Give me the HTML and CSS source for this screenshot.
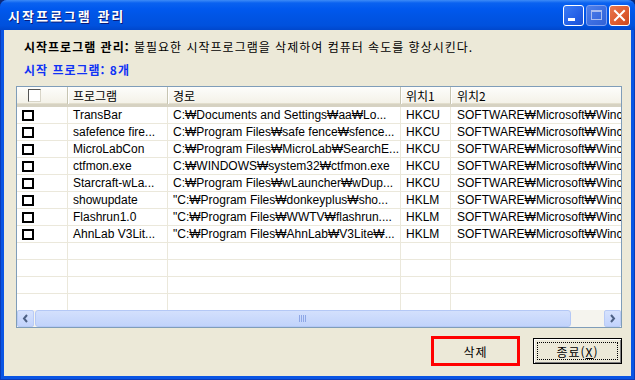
FILE: index.html
```html
<!DOCTYPE html>
<html lang="ko">
<head>
  <meta charset="UTF-8" />
  <title>시작프로그램 관리</title>
  <link rel="stylesheet" href="styles.css">
</head>
<body>
  <div class="window">
    <div class="titlebar">
      <span class="title">시작프로그램 관리</span>
      <div class="controls">
        <div class="tbtn min">
          <svg width="21" height="21" viewBox="0 0 21 21"><rect x="5" y="13" width="7" height="3" fill="#fff"/></svg>
        </div>
        <div class="tbtn max">
          <svg width="21" height="21" viewBox="0 0 21 21"><rect x="5.5" y="5.5" width="10" height="9" fill="none" stroke="#a9bdf0" stroke-width="1"/><rect x="5" y="5" width="11" height="2" fill="#a9bdf0"/></svg>
        </div>
        <div class="tbtn close">
          <svg width="21" height="21" viewBox="0 0 21 21"><path d="M6 6 L15 15 M15 6 L6 15" stroke="#fff" stroke-width="2" stroke-linecap="square"/></svg>
        </div>
      </div>
    </div>

    <div class="client">
      <p class="desc"><b>시작프로그램 관리:</b> 불필요한 시작프로그램을 삭제하여 컴퓨터 속도를 향상시킨다.</p>
      <p class="count">시작 프로그램: 8개</p>

      <div class="listview">
        <div class="row hdr">
          <div class="cell c1"><span class="hchk"></span></div>
          <div class="cell c2">프로그램</div>
          <div class="cell c3">경로</div>
          <div class="cell c4">위치1</div>
          <div class="cell c5">위치2</div>
        </div>

        <div class="rows">
          <div class="row">
            <div class="cell c1"><span class="chk"></span></div>
            <div class="cell c2">TransBar</div>
            <div class="cell c3">C:₩Documents and Settings₩aa₩Lo...</div>
            <div class="cell c4">HKCU</div>
            <div class="cell c5">SOFTWARE₩Microsoft₩Winc</div>
          </div>
          <div class="row">
            <div class="cell c1"><span class="chk"></span></div>
            <div class="cell c2">safefence fire...</div>
            <div class="cell c3">C:₩Program Files₩safe fence₩sfence...</div>
            <div class="cell c4">HKCU</div>
            <div class="cell c5">SOFTWARE₩Microsoft₩Winc</div>
          </div>
          <div class="row">
            <div class="cell c1"><span class="chk"></span></div>
            <div class="cell c2">MicroLabCon</div>
            <div class="cell c3">C:₩Program Files₩MicroLab₩SearchE...</div>
            <div class="cell c4">HKCU</div>
            <div class="cell c5">SOFTWARE₩Microsoft₩Winc</div>
          </div>
          <div class="row">
            <div class="cell c1"><span class="chk"></span></div>
            <div class="cell c2">ctfmon.exe</div>
            <div class="cell c3">C:₩WINDOWS₩system32₩ctfmon.exe</div>
            <div class="cell c4">HKCU</div>
            <div class="cell c5">SOFTWARE₩Microsoft₩Winc</div>
          </div>
          <div class="row">
            <div class="cell c1"><span class="chk"></span></div>
            <div class="cell c2">Starcraft-wLa...</div>
            <div class="cell c3">C:₩Program Files₩wLauncher₩wDup...</div>
            <div class="cell c4">HKCU</div>
            <div class="cell c5">SOFTWARE₩Microsoft₩Winc</div>
          </div>
          <div class="row">
            <div class="cell c1"><span class="chk"></span></div>
            <div class="cell c2">showupdate</div>
            <div class="cell c3">"C:₩Program Files₩donkeyplus₩sho...</div>
            <div class="cell c4">HKLM</div>
            <div class="cell c5">SOFTWARE₩Microsoft₩Winc</div>
          </div>
          <div class="row">
            <div class="cell c1"><span class="chk"></span></div>
            <div class="cell c2">Flashrun1.0</div>
            <div class="cell c3">"C:₩Program Files₩WWTV₩flashrun....</div>
            <div class="cell c4">HKLM</div>
            <div class="cell c5">SOFTWARE₩Microsoft₩Winc</div>
          </div>
          <div class="row">
            <div class="cell c1"><span class="chk"></span></div>
            <div class="cell c2">AhnLab V3Lit...</div>
            <div class="cell c3">"C:₩Program Files₩AhnLab₩V3Lite₩...</div>
            <div class="cell c4">HKLM</div>
            <div class="cell c5">SOFTWARE₩Microsoft₩Winc</div>
          </div>

          <div class="row"><div class="cell c1"></div><div class="cell c2"></div><div class="cell c3"></div><div class="cell c4"></div><div class="cell c5"></div></div>
          <div class="row"><div class="cell c1"></div><div class="cell c2"></div><div class="cell c3"></div><div class="cell c4"></div><div class="cell c5"></div></div>
          <div class="row"><div class="cell c1"></div><div class="cell c2"></div><div class="cell c3"></div><div class="cell c4"></div><div class="cell c5"></div></div>
          <div class="row"><div class="cell c1"></div><div class="cell c2"></div><div class="cell c3"></div><div class="cell c4"></div><div class="cell c5"></div></div>
        </div>

        <div class="hscroll">
          <div class="sbtn">
            <svg width="15" height="15" viewBox="0 0 15 15"><path d="M9 4 L6 7.5 L9 11" fill="none" stroke="#4d6185" stroke-width="2"/></svg>
          </div>
          <div class="thumb">
            <svg width="8" height="7" viewBox="0 0 8 7"><path d="M0.5 0 V7 M2.5 0 V7 M4.5 0 V7 M6.5 0 V7" stroke="#8ea7e6" stroke-width="1"/></svg>
          </div>
          <div class="track"></div>
          <div class="sbtn">
            <svg width="15" height="15" viewBox="0 0 15 15"><path d="M6 4 L9 7.5 L6 11" fill="none" stroke="#4d6185" stroke-width="2"/></svg>
          </div>
        </div>
      </div>

      <div class="actions">
        <button class="btn btn-del">삭제</button>
        <button class="btn btn-close"><span class="focus">종료(<u>X</u>)</span></button>
      </div>
    </div>
  </div>
</body>
</html>
```

FILE: styles.css
```css
body {
  margin: 0;
  background-color: #0c2a7a;
  font-family: "Noto Sans CJK KR", sans-serif;
  font-size: 12px;
  color: #000;
}
.window {
  width: 635px;
  height: 380px;
  display: flex;
  flex-direction: column;
  background-color: #0a55e4;
  border-radius: 7px 7px 0 0;
  box-shadow: inset 1px 0 #0b3bb8, inset -1px 0 #0b3bb8, inset 0 -1px #0b3bb8;
}
.titlebar {
  height: 30px;
  display: flex;
  align-items: center;
  justify-content: space-between;
  border-radius: 7px 7px 0 0;
  background: linear-gradient(#3d8bf7 0, #0a62f0 3px, #0058ee 9px, #0055e6 50%, #0051dd 85%, #0047cc 100%);
}
.title {
  padding-left: 8px;
  color: #fff;
  font-weight: bold;
  font-size: 13px;
  letter-spacing: 2px;
  text-shadow: 1px 1px #0a1a7a;
}
.controls {
  display: flex;
  gap: 2px;
  padding-right: 5px;
}
.tbtn {
  width: 21px;
  height: 21px;
  box-sizing: border-box;
  border: 1px solid #fff;
  border-radius: 3px;
  display: flex;
}
.tbtn svg {
  margin: -1px;
}
.min {
  background: linear-gradient(135deg, #3c7cf5, #2460e6 60%, #1c50d4);
}
.max {
  border-color: #7e9ff0;
  background: linear-gradient(135deg, #4f80ea, #3a6ce0 60%, #3262d6);
}
.close {
  background: linear-gradient(135deg, #e8784f, #dd5a2e 60%, #c9481e);
}
.client {
  flex: 1;
  margin: 0 4px 4px;
  padding-top: 9px;
  background-color: #ece9d8;
}
.desc {
  margin: 0 0 0 20px;
  line-height: 16px;
  letter-spacing: 1px;
}
.count {
  margin: 7px 0 0 20px;
  line-height: 16px;
  color: #1133f5;
  font-weight: bold;
  letter-spacing: 1px;
}
.listview {
  width: 606px;
  height: 242px;
  box-sizing: border-box;
  margin: 8px 0 0 12px;
  border: 1px solid #7f9db9;
  background-color: #fff;
  display: flex;
  flex-direction: column;
}
.rows {
  flex: 1;
  overflow: hidden;
}
.row {
  display: flex;
  height: 17px;
  box-sizing: border-box;
  border-bottom: 1px solid #ebe8db;
  font-family: "Liberation Sans", "Noto Sans CJK KR", sans-serif;
}
.cell {
  box-sizing: border-box;
  border-right: 1px solid #ebe8db;
  padding-left: 5px;
  line-height: 16px;
  white-space: nowrap;
  overflow: hidden;
  display: flex;
  align-items: center;
}
.c1 { width: 51px; }
.c2 { width: 100px; }
.c3 { width: 233px; }
.c4 { width: 50px; }
.c5 { flex: 1; padding-left: 6px; border-right: none; }
.hdr {
  height: 20px;
  flex-shrink: 0;
  background: linear-gradient(#fdfdfb, #f3f1e7);
  border-bottom: 3px solid #d6d2c2;
  box-shadow: inset 0 -1px #e2decd;
  font-family: "Noto Sans CJK KR", sans-serif;
}
.hdr .cell {
  border-right: 1px solid #c7c5b2;
  box-shadow: 1px 0 #fff;
}
.hdr .c5 {
  border-right: none;
  box-shadow: none;
}
.chk {
  width: 12px;
  height: 11px;
  box-sizing: border-box;
  border: 2px solid #000;
  background-color: #fff;
}
.hchk {
  width: 13px;
  height: 13px;
  box-sizing: border-box;
  margin-left: 6px;
  border: 1px solid;
  border-color: #555 #d8d5c8 #d8d5c8 #555;
  background-color: #fff;
}
.hscroll {
  display: flex;
  height: 17px;
  flex-shrink: 0;
  background-color: #f5f4ee;
}
.sbtn {
  width: 17px;
  height: 17px;
  box-sizing: border-box;
  border: 1px solid #b9cbf5;
  border-radius: 2px;
  background: linear-gradient(#d6e2fd, #c2d3fc);
  display: flex;
  align-items: center;
  justify-content: center;
}
.thumb {
  width: 536px;
  height: 17px;
  box-sizing: border-box;
  margin-left: 1px;
  border: 1px solid #b4c8f6;
  border-radius: 3px;
  background: linear-gradient(#d3e0fd, #c1d3fb);
  display: flex;
  align-items: center;
  justify-content: center;
}
.track {
  flex: 1;
}
.actions {
  display: flex;
  justify-content: flex-end;
  align-items: center;
  gap: 13px;
  height: 30px;
  margin: 8px 9px 0 0;
}
.btn {
  width: 89px;
  padding: 0;
  font-family: "Noto Sans CJK KR", sans-serif;
  font-size: 12px;
  letter-spacing: 1px;
  color: #000;
  background-color: #ece9d8;
  box-sizing: border-box;
}
.btn-del {
  height: 30px;
  border: 3px solid #ff0000;
}
.btn-close {
  height: 26px;
  border: 1px solid #000;
  box-shadow: inset 1px 1px #fff, inset -1px -1px #808080;
  padding: 3px;
}
.focus {
  display: flex;
  align-items: center;
  justify-content: center;
  height: 100%;
  border: 1px dotted #000;
  box-sizing: border-box;
}
```
